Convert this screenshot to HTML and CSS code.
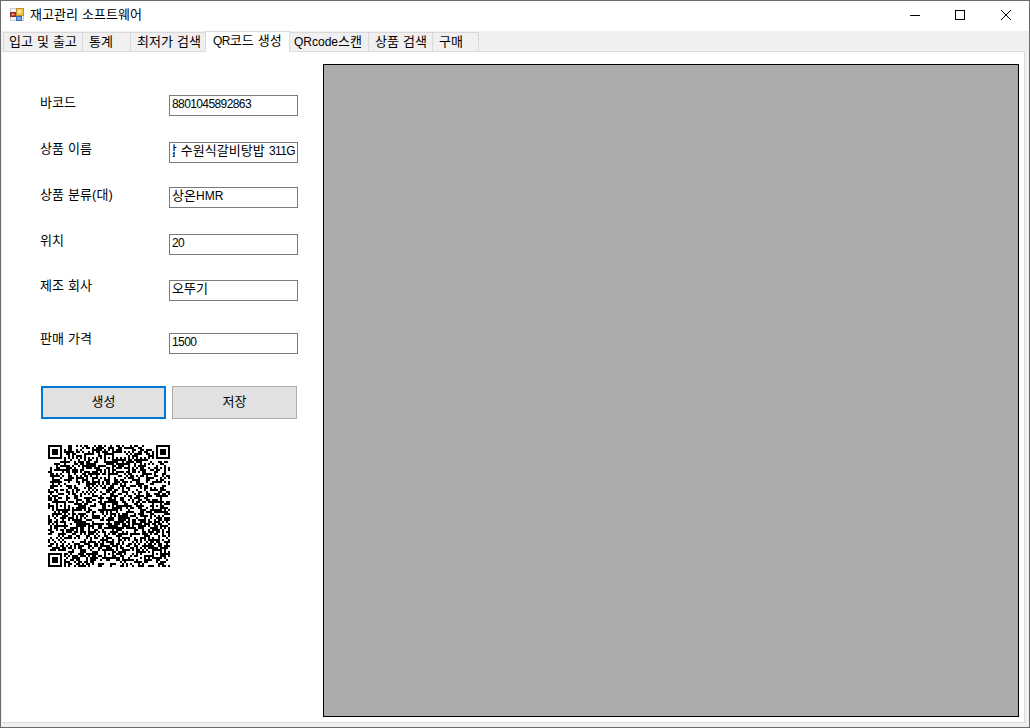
FILE: index.html
```
<!DOCTYPE html>
<html lang="ko">
<head>
<meta charset="utf-8">
<title>재고관리 소프트웨어</title>
<link rel="stylesheet" href="styles.css">
</head>
<body>
<div class="window">
  <header class="titlebar">
    <svg class="app-icon" width="14" height="14" viewBox="0 0 14 14">
      <rect x="0.5" y="0.5" width="13" height="12" fill="#f1f1f1" stroke="#cfcfcf"/>
      <rect x="6.5" y="0.5" width="7" height="7" fill="#f5c542" stroke="#c09030"/>
      <rect x="8" y="2" width="3" height="3" fill="#ffe69a"/>
      <rect x="0.5" y="4.5" width="5" height="4" fill="#c9473a" stroke="#952c25"/>
      <rect x="2" y="6" width="2" height="1" fill="#f3b0a0"/>
      <rect x="6.5" y="8.5" width="5" height="4" fill="#7ba6e4" stroke="#3d68b5"/>
    </svg>
    <span class="title">재고관리 소프트웨어</span>
    <svg class="controls" width="105" height="12" viewBox="0 0 105 12" fill="none" stroke="#000">
      <path d="M0 6.5H10"/>
      <rect x="45.5" y="1.5" width="9" height="9"/>
      <path d="M91 1L101 11M101 1L91 11"/>
    </svg>
  </header>
  <nav class="tabs">
    <span class="tab tab-inout">입고 및 출고</span>
    <span class="tab tab-stats">통계</span>
    <span class="tab tab-lowest">최저가 검색</span>
    <span class="tab tab-qr active"><span class="latin tight">QR</span>코드 생성</span>
    <span class="tab tab-scan"><span class="latin">QRcode</span>스캔</span>
    <span class="tab tab-search">상품 검색</span>
    <span class="tab tab-buy">구매</span>
  </nav>
  <main class="page">
    <section class="form">
      <div class="row barcode"><label>바코드</label><div class="field"><span class="digits">8801045892863</span></div></div>
      <div class="row name"><label>상품 이름</label><div class="field scrolled"><span>밥 수원식갈비탕밥 <span class="digits">311G</span></span></div></div>
      <div class="row category"><label>상품 분류(대)</label><div class="field">상온<span class="latin">HMR</span></div></div>
      <div class="row place"><label>위치</label><div class="field"><span class="digits">20</span></div></div>
      <div class="row maker"><label>제조 회사</label><div class="field">오뚜기</div></div>
      <div class="row price"><label>판매 가격</label><div class="field"><span class="digits">1500</span></div></div>
      <div class="buttons">
        <button class="button primary">생성</button>
        <button class="button">저장</button>
      </div>
      <svg class="qr" id="qr" width="122" height="122" viewBox="0 0 61 61" shape-rendering="crispEdges"></svg>
    </section>
    <section class="grid-area"></section>
  </main>
</div>
<script src="qr.js"></script>
</body>
</html>
```
FILE: styles.css
```
* { box-sizing: border-box; }
body {
  margin: 0;
  font: 13px/16px "Liberation Sans", "Noto Sans CJK KR", sans-serif;
  letter-spacing: 0.04px;
  word-spacing: 0.4px;
  color: #000;
}
.window {
  width: 1030px;
  height: 728px;
  display: flex;
  flex-direction: column;
  border: 1px solid #6b6b6b;
  background: #f0f0f0;
  overflow: hidden;
}
.titlebar {
  height: 30px;
  flex: none;
  display: flex;
  align-items: center;
  padding: 0 14px 2px 9px;
  background: #fff;
}
.title { margin-left: 6px; }
.controls { margin-left: auto; }
.latin { font-size: 12px; letter-spacing: 0; }
.tight { letter-spacing: -0.6px; }
.digits { font-size: 12px; letter-spacing: -0.6px; }
.tabs {
  height: 20px;
  flex: none;
  display: flex;
  align-items: flex-end;
  padding-left: 2px;
}
.tab {
  height: 19px;
  flex: none;
  padding: 1px 0 0 6px;
  border-top: 1px solid #d9d9d9;
  border-right: 1px solid #d9d9d9;
  white-space: nowrap;
}
.tab-inout { width: 80px; border-left: 1px solid #d9d9d9; padding-left: 5px; }
.tab-stats { width: 48px; }
.tab-lowest { width: 74px; border-right: 0; }
.tab-qr { width: 85px; border-left: 1px solid #d9d9d9; }
.tab-scan { width: 79px; padding-left: 4px; }
.tab-search { width: 64px; }
.tab-buy { width: 46px; }
.tab.active { height: 21px; margin-bottom: -1px; padding-left: 7px; background: #fff; position: relative; }
.page {
  height: 672px;
  flex: none;
  display: flex;
  margin: 0 4px 0 1px;
  border: 1px solid #dcdcdc;
  border-left: 0;
  background: #fff;
}
.form {
  width: 321px;
  flex: none;
  padding: 43px 0 0 38px;
}
.row { display: flex; height: 21px; }
.row label { width: 129px; flex: none; white-space: nowrap; }
.field {
  width: 129px;
  height: 21px;
  border: 1px solid #7a7a7a;
  padding: 0 2px;
  line-height: 15px;
  white-space: nowrap;
  overflow: hidden;
}
.scrolled { display: flex; justify-content: flex-end; }
.scrolled > span { clip-path: inset(0 0 0 8px); }
.name { margin-top: 26px; }
.category { margin-top: 24px; }
.place { margin-top: 26px; }
.maker { margin-top: 25px; }
.price { margin-top: 32px; }
.name label, .place label { margin-top: -1px; }
.maker label, .price label { margin-top: -2px; }
.buttons { display: flex; gap: 6px; margin: 32px 0 0 1px; }
.button {
  width: 125px;
  height: 33px;
  padding: 0 0 2px;
  border: 1px solid #adadad;
  background: #e1e1e1;
  font: inherit;
  letter-spacing: inherit;
  color: inherit;
}
.primary { border: 2px solid #0078d7; }
.qr { display: block; margin: 26px 0 0 8px; }
.grid-area {
  width: 696px;
  height: 653px;
  margin-top: 12px;
  border: 1px solid #000;
  background: #ababab;
}
```
FILE: qr.js
```
// Draws a 61-module symbol: finders, alignment marks, timing lines and data.
const N = 61;
const centers = [6, 30, 54];
let seed = 88010458;
function bit() {
  seed ^= seed << 13;
  seed ^= seed >>> 17;
  seed ^= seed << 5;
  return (seed >>> 0) / 4294967296 < 0.52 ? 1 : 0;
}
function ring(x, y, cx, cy) {
  return Math.max(Math.abs(x - cx), Math.abs(y - cy));
}
function dark(x, y) {
  const data = bit();
  for (const [cx, cy] of [[3, 3], [57, 3], [3, 57]]) {
    const r = ring(x, y, cx, cy);
    if (r <= 4) return r !== 2 && r !== 4;
  }
  for (const cx of centers) {
    for (const cy of centers) {
      if ((cx === 6 && cy !== 30) || (cy === 6 && cx !== 30)) continue;
      const r = ring(x, y, cx, cy);
      if (r <= 2) return r !== 1;
    }
  }
  if (x === 6 || y === 6) return (x + y) % 2 === 0;
  return data === 1;
}
let d = "";
for (let y = 0; y < N; y++) {
  for (let x = 0; x < N; x++) {
    if (dark(x, y)) d += `M${x} ${y}h1v1h-1z`;
  }
}
const path = document.createElementNS("http://www.w3.org/2000/svg", "path");
path.setAttribute("d", d);
document.getElementById("qr").appendChild(path);
```
